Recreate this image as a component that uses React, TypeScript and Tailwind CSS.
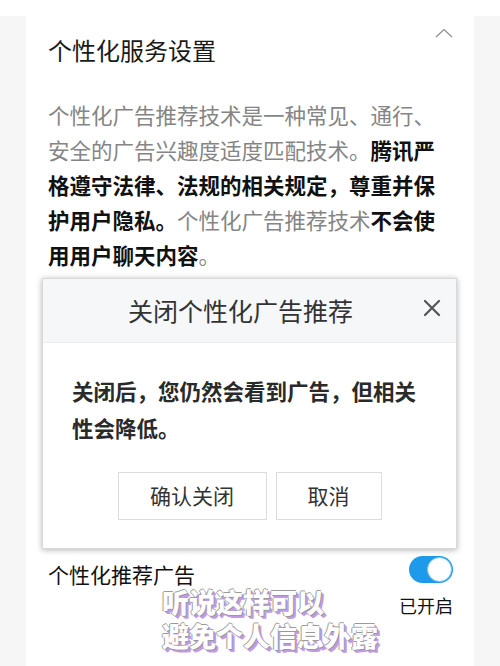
import React from "react";

export default function App() {
  const font = { fontFamily: '"Noto Sans CJK SC", "Noto Sans", sans-serif' };
  return (
    <div
      className="relative w-[500px] h-[666px] overflow-hidden bg-[#f6f6f6] font-['Noto_Sans_CJK_SC','Noto_Sans',sans-serif]"
    >
      <div className="h-[16px] bg-white" />
      <div className="mx-[26px] h-[700px] bg-white pl-[22px] pr-[21px]">
        <div className="flex items-start justify-between pt-[18px]">
          <div className="text-[24px] leading-[32px] text-[#1a1a1a]">个性化服务设置</div>
          <svg width="18" height="10" viewBox="0 0 18 10" className="mt-[-6px] mr-[0px]">
            <path d="M1 9 L9 1.5 L17 9" fill="none" stroke="#8a8a8a" strokeWidth="1.1" />
          </svg>
        </div>
        <p className="mt-[31px] w-[395px] text-[21.5px] leading-[35px] text-[#858585]">
          个性化广告推荐技术是一种常见、通行、安全的广告兴趣度适度匹配技术。
          <span className="font-bold text-[#111]">腾讯严格遵守法律、法规的相关规定，尊重并保护用户隐私。</span>
          个性化广告推荐技术
          <span className="font-bold text-[#111]">不会使用用户聊天内容</span>。
        </p>
        <div className="mt-[284px] flex items-start justify-between">
          <div className="mt-[3px] text-[21px] leading-[30px] text-[#111]">个性化推荐广告</div>
          <div className="flex flex-col items-end">
            <div className="flex h-[27px] w-[44px] items-center justify-end rounded-full bg-[#1e9aea] pr-[1px]">
              <div className="h-[25px] w-[25px] rounded-full border border-[#7fc3ee] bg-white" />
            </div>
            <div className="mt-[9px] text-[18px] leading-[26px] text-[#111]">已开启</div>
          </div>
        </div>
      </div>

      {/* dialog */}
      <div className="absolute left-[42px] top-[278px] w-[415px] h-[271px] bg-white border border-[#d9d9d9] shadow-[0_1px_6px_rgba(0,0,0,0.3)]">
        <div className="relative flex h-[64px] items-center justify-center bg-[#f6f7f9] border-b border-[#ececec]">
          <div className="mr-[18px] text-[25px] text-[#333]">关闭个性化广告推荐</div>
          <svg width="18" height="18" viewBox="0 0 18 18" className="absolute right-[15px] top-[20px]">
            <path d="M2 2 L16 16 M16 2 L2 16" stroke="#555" strokeWidth="2.2" strokeLinecap="round" />
          </svg>
        </div>
        <div className="px-[29px] pt-[29px] text-[21.5px] leading-[37px] font-bold text-[#2a2a2a]">
          关闭后，您仍然会看到广告，但相关性会降低。
        </div>
        <div className="mt-[26px] flex justify-center gap-[9px]">
          <button className="h-[48px] w-[149px] border border-[#dcdcdc] bg-white text-[21px] text-[#333]">确认关闭</button>
          <button className="h-[48px] w-[106px] border border-[#dcdcdc] bg-white text-[21px] text-[#333]">取消</button>
        </div>
      </div>

      {/* caption overlay */}
      <div
        className="absolute left-[162px] top-[585px] text-[27px] leading-[34px] font-black text-white [text-shadow:1px_1px_0_#9a9a9a,2px_2px_0_#c39ae8,3px_3px_0_#c39ae8,-1px_0_0_#9a9a9a,0_-1px_0_#9a9a9a]"
        style={font}
      >
        <div>听说这样可以</div>
        <div>避免个人信息外露</div>
      </div>
    </div>
  );
}
